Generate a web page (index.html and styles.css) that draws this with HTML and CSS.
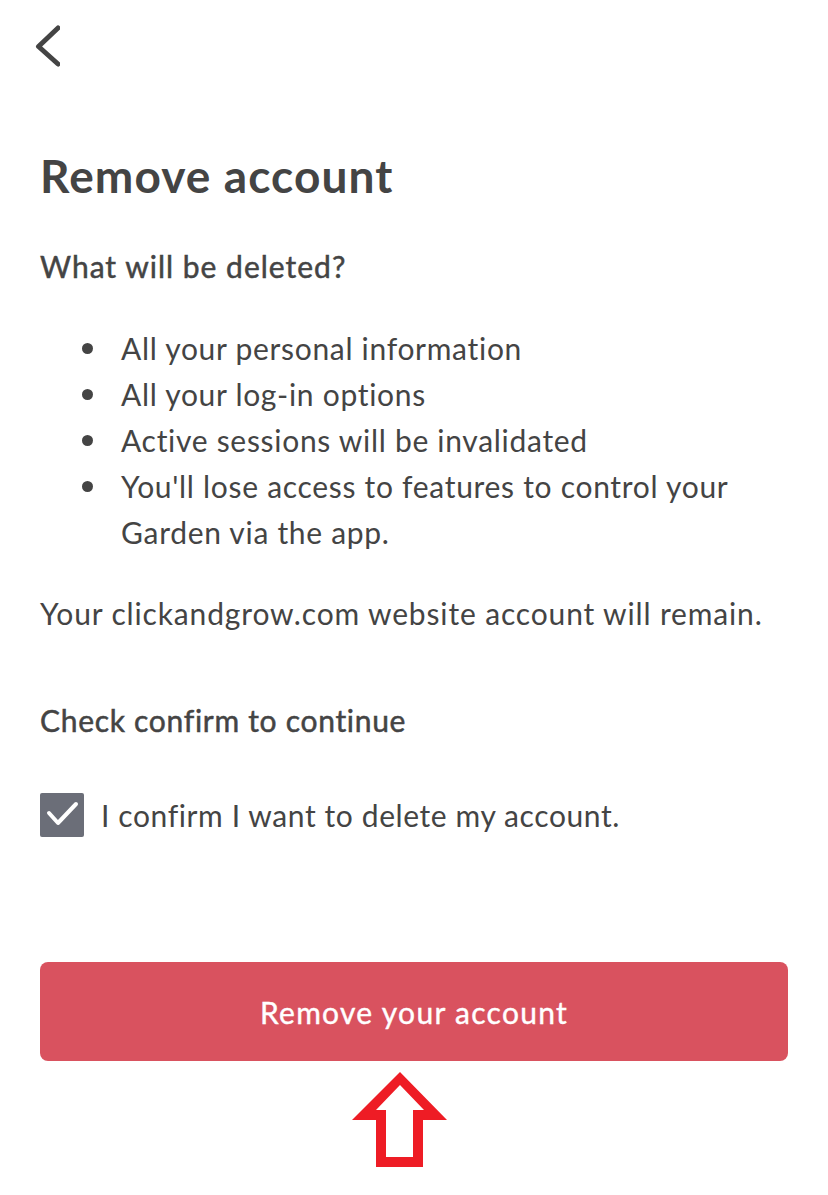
FILE: index.html
```html
<!DOCTYPE html>
<html lang="en">
<head>
<meta charset="utf-8">
<title>Remove account</title>
<link rel="stylesheet" href="styles.css">
</head>
<body>
<div class="page">
  <header class="topbar">
    <svg class="back" width="30" height="50" viewBox="0 0 30 50" aria-label="Back">
      <polyline points="28,8 8.5,26.5 28,44" fill="none" stroke="#444" stroke-width="5" stroke-linecap="round" stroke-linejoin="round"/>
    </svg>
  </header>
  <h1 class="title">Remove account</h1>
  <h2 class="subtitle">What will be deleted?</h2>
  <ul class="list">
    <li><span>All your personal information</span></li>
    <li><span>All your log-in options</span></li>
    <li><span>Active sessions will be invalidated</span></li>
    <li><span>You'll lose access to features to control your<br>Garden via the app.</span></li>
  </ul>
  <p class="note">Your clickandgrow.com website account will remain.</p>
  <h2 class="subtitle confirm-head">Check confirm to continue</h2>
  <label class="confirm">
    <span class="box">
      <svg width="44" height="44" viewBox="0 0 44 44"><polyline points="9,20 18,30 36,11" fill="none" stroke="#fff" stroke-width="4" stroke-linecap="round" stroke-linejoin="round"/></svg>
    </span>
    <span class="confirm-text">I confirm I want to delete my account.</span>
  </label>
  <button class="remove">Remove your account</button>
  <div class="pointer">
    <svg width="96" height="96" viewBox="0 0 96 96">
      <polygon points="48,0 95,48 71,48 71,95 24,95 24,48 0,48" fill="#ee1c25"/>
      <polygon points="48,13 72,38 61,38 61,85 34,85 34,38 24,38" fill="#fff"/>
    </svg>
  </div>
</div>
</body>
</html>
```
FILE: styles.css
```css
* { box-sizing: border-box; }
html, body { margin: 0; padding: 0; background: #fff; }
body {
  font-family: "Lato", "Noto Sans", sans-serif;
  color: #444;
}
.page {
  width: 828px;
  padding: 0 40px;
}
.topbar {
  height: 92px;
  padding-top: 20px;
}
.back { display: block; margin-left: -10px; }
.title {
  margin: 56px 0 0;
  font-size: 46px;
  line-height: 56px;
  font-weight: 700;
  letter-spacing: 1.1px;
}
.subtitle {
  margin: 39px 0 0;
  font-size: 30px;
  line-height: 46px;
  font-weight: 400;
  letter-spacing: 1px;
  -webkit-text-stroke: 0.5px #444;
}
.list {
  list-style: none;
  margin: 36px 0 0;
  padding: 0 0 0 42px;
  font-size: 30px;
  line-height: 46px;
  letter-spacing: 0.7px;
}
.list li { display: flex; align-items: flex-start; }
.list li::before {
  content: "";
  flex: none;
  width: 11px;
  height: 11px;
  border-radius: 50%;
  background: #444;
  margin-top: 18px;
  margin-right: 28px;
}
.note {
  margin: 35px 0 0;
  font-size: 30px;
  line-height: 46px;
  letter-spacing: 0.85px;
}
.confirm-head { margin-top: 61px; letter-spacing: 0.7px; }
.confirm {
  display: flex;
  align-items: center;
  gap: 17px;
  margin-top: 50px;
  font-size: 30px;
  line-height: 44px;
  letter-spacing: 0.6px;
}
.box {
  width: 44px;
  height: 44px;
  background: #6b6e78;
  border-radius: 2px;
  display: block;
}
.box svg { display: block; }
.remove {
  display: block;
  width: 100%;
  height: 99px;
  margin-top: 125px;
  border: none;
  border-radius: 8px;
  background: #d9525f;
  color: #fff;
  font-family: inherit;
  font-size: 30px;
  font-weight: 400;
  letter-spacing: 1.3px;
  -webkit-text-stroke: 0.4px #fff;
}
.pointer {
  display: flex;
  justify-content: center;
  margin-top: 11px;
  padding-right: 28px;
}
.pointer svg { display: block; }
```
